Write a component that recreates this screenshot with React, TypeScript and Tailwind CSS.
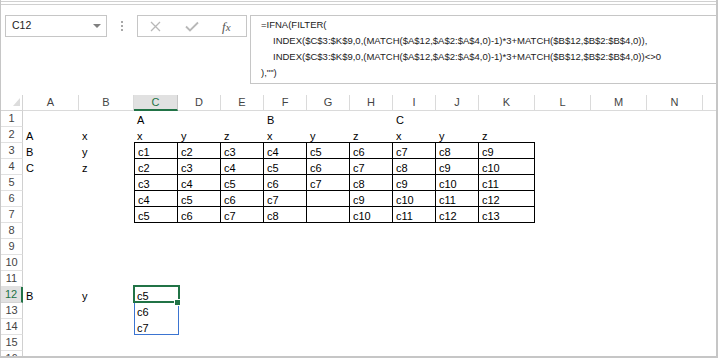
import React from "react";

const LETTERS = ["", "A", "B", "C", "D", "E", "F", "G", "H", "I", "J", "K", "L", "M", "N", "O"];

const DATA: Record<number, Record<number, string>> = {
  1: { 3: "A", 6: "B", 9: "C" },
  2: { 1: "A", 2: "x", 3: "x", 4: "y", 5: "z", 6: "x", 7: "y", 8: "z", 9: "x", 10: "y", 11: "z" },
  3: { 1: "B", 2: "y", 3: "c1", 4: "c2", 5: "c3", 6: "c4", 7: "c5", 8: "c6", 9: "c7", 10: "c8", 11: "c9" },
  4: { 1: "C", 2: "z", 3: "c2", 4: "c3", 5: "c4", 6: "c5", 7: "c6", 8: "c7", 9: "c8", 10: "c9", 11: "c10" },
  5: { 3: "c3", 4: "c4", 5: "c5", 6: "c6", 7: "c7", 8: "c8", 9: "c9", 10: "c10", 11: "c11" },
  6: { 3: "c4", 4: "c5", 5: "c6", 6: "c7", 8: "c9", 9: "c10", 10: "c11", 11: "c12" },
  7: { 3: "c5", 4: "c6", 5: "c7", 6: "c8", 8: "c10", 9: "c11", 10: "c12", 11: "c13" },
  12: { 1: "B", 2: "y", 3: "c5" },
  13: { 3: "c6" },
  14: { 3: "c7" },
};

function cellClass(r: number, c: number) {
  const inTable = r >= 3 && r <= 7 && c >= 3 && c <= 11;
  const topEdge = r === 2 && c >= 3 && c <= 11;
  let cls = "h-[16px] leading-[16px] pl-[3px] pt-[1px] text-[11px] text-black whitespace-nowrap overflow-visible";
  if (inTable) {
    cls += " border-r border-b border-black";
    if (c === 3) cls += " border-l";
  } else if (topEdge) {
    cls += " border-b border-black";
  }
  return cls;
}

export default function App() {
  const rows = Array.from({ length: 16 }, (_, i) => i + 1);
  return (
    <div className="w-[719px] h-[359px] bg-white overflow-hidden" style={{ fontFamily: '"Liberation Sans", Arial, sans-serif' }}>
      <div className="w-[718px] h-[358px] border-l border-r-2 border-b-2 border-[#c6c6c6] flex flex-col">
        <div className="mt-[1px] h-[4px] border-t border-b border-[#d0d0d0]" />
        {/* formula bar */}
        <div className="flex items-start pt-[10px] pb-[11px] pl-[4px]">
          <div className="w-[102px] h-[22px] border border-[#c6c6c6] flex items-center justify-between pl-[6px] pr-[5px]">
            <span className="text-[10.5px] text-[#222]">C12</span>
            <svg width="8" height="4" viewBox="0 0 8 4"><polygon points="0,0 8,0 4,4" fill="#808080" /></svg>
          </div>
          <div className="w-[30px] h-[22px] flex flex-col items-center justify-center gap-[2px]">
            <div className="w-[2px] h-[2px] bg-[#a8a8a8]" />
            <div className="w-[2px] h-[2px] bg-[#a8a8a8]" />
            <div className="w-[2px] h-[2px] bg-[#a8a8a8]" />
          </div>
          <div className="w-[110px] h-[22px] border border-[#c6c6c6] flex items-center pl-[12px]">
            <svg width="11" height="11" viewBox="0 0 11 11"><path d="M1 1 L10 10 M10 1 L1 10" stroke="#b8b8b8" strokeWidth="1.3" fill="none" /></svg>
            <svg className="ml-[24px]" width="14" height="11" viewBox="0 0 14 11"><path d="M1 5.5 L5 9.5 L13 1.5" stroke="#b8b8b8" strokeWidth="1.8" fill="none" /></svg>
            <span className="ml-[23px] text-[13px] italic text-[#555] leading-none" style={{ fontFamily: '"Liberation Serif", serif' }}>
              f<span className="text-[11px]">x</span>
            </span>
          </div>
          <div className="ml-[3px] flex-1 h-[69px] border-l border-t border-b border-[#c6c6c6] pl-[10px] pt-[1px] text-[9.5px] leading-[16px] text-[#222] whitespace-pre">
            <div>=IFNA(FILTER(</div>
            <div className="pl-[12px]">INDEX($C$3:$K$9,0,(MATCH($A$12,$A$2:$A$4,0)-1)*3+MATCH($B$12,$B$2:$B$4,0)),</div>
            <div className="pl-[12px]">INDEX($C$3:$K$9,0,(MATCH($A$12,$A$2:$A$4,0)-1)*3+MATCH($B$12,$B$2:$B$4,0))&lt;&gt;0</div>
            <div>),""&#41;</div>
          </div>
        </div>
        {/* sheet */}
        <div className="flex-1 relative overflow-hidden">
          <div className="grid grid-cols-[22px_56px_55px_44px_43px_43px_43px_43px_43px_43px_43px_56px_56px_56px_56px_56px] auto-rows-[16px] w-max">
            {LETTERS.map((l, c) =>
              c === 0 ? (
                <div key="corner" className="border-r border-b border-[#d4d4d4] relative">
                  <svg className="absolute left-[12px] top-[3px]" width="7" height="8" viewBox="0 0 7 8"><polygon points="7,0 7,8 0,8" fill="#dcdcdc" /></svg>
                </div>
              ) : c === 3 ? (
                <div key={l} className="bg-[#e1e1e1] border-r border-r-[#c6c6c6] border-b-2 border-b-[#217346] text-center text-[11px] leading-[15px] text-[#217346]">
                  {l}
                </div>
              ) : (
                <div key={l} className="border-r border-b border-[#dadada] text-center text-[11px] leading-[15px] text-[#444]">
                  {l}
                </div>
              )
            )}
            {rows.map((r) => (
              <React.Fragment key={r}>
                {r === 12 ? (
                  <div className="bg-[#e1e1e1] border-r-2 border-r-[#217346] border-b border-b-[#d4d4d4] text-center text-[11px] leading-[15px] text-[#217346]">
                    {r}
                  </div>
                ) : (
                  <div className="border-r border-r-[#d0d0d0] border-b border-b-[#e1e1e1] text-center text-[11px] leading-[15px] text-[#444]">
                    {r}
                  </div>
                )}
                {LETTERS.slice(1).map((_, i) => {
                  const c = i + 1;
                  return (
                    <div key={c} className={cellClass(r, c)}>
                      {DATA[r]?.[c] ?? ""}
                    </div>
                  );
                })}
              </React.Fragment>
            ))}
          </div>
          {/* spill range outline */}
          <div className="absolute left-[133px] top-[191px] w-[45px] h-[49px] border border-[#3b74d1] pointer-events-none" />
          {/* active cell */}
          <div className="absolute left-[132px] top-[190px] w-[47px] h-[18px] border-2 border-[#217346] pointer-events-none" />
          {/* fill handle */}
          <div className="absolute left-[173px] top-[204px] w-[7px] h-[7px] bg-[#217346] border border-white" />
        </div>
      </div>
    </div>
  );
}
